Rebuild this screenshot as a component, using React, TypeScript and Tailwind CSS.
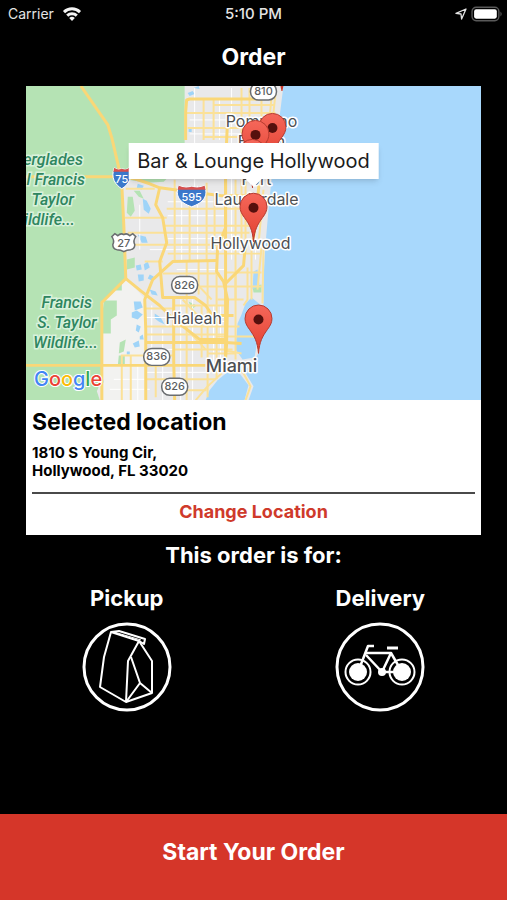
import React, { useState } from 'react';

type OrderType = 'pickup' | 'delivery';

const parkLabels = [
  { x: 83, y: 165, text: 'erglades' },
  { x: 85, y: 185, text: 'l Francis' },
  { x: 74, y: 205, text: 'Taylor' },
  { x: 75, y: 225, text: 'ildlife...' },
  { x: 92, y: 308, text: 'Francis' },
  { x: 97, y: 329, text: 'S. Taylor' },
  { x: 98, y: 349, text: 'Wildlife...' },
];

const cityLabels = [
  { x: 262, y: 127, text: 'Pompano', size: 16 },
  { x: 262, y: 147, text: 'Beach', size: 16 },
  { x: 257, y: 185, text: 'Fort', size: 16 },
  { x: 257, y: 205, text: 'Lauderdale', size: 16 },
  { x: 251, y: 249, text: 'Hollywood', size: 16 },
  { x: 194, y: 325, text: 'Hialeah', size: 16 },
  { x: 232, y: 373, text: 'Miami', size: 18 },
];

const routes = [
  { x: 264, y: 91, text: '810' },
  { x: 185, y: 285, text: '826' },
  { x: 157, y: 357, text: '836' },
  { x: 175, y: 387, text: '826' },
];

const pins = [
  { x: 273, y: 162 },
  { x: 256, y: 169 },
  { x: 253, y: 188 },
  { x: 254, y: 242 },
  { x: 259, y: 354 },
];

const mainRoads = [
  'M81 86 L108 125 L112 138 L119 168 L122 185 L124 225 L126 279 L102 303 L102 401',
  'M26 177 H120 L135 179 L150 184 L160 188 L190 192 L222 196 H262',
  'M160 188 L156 205 L163 218 L167 243 L160 262 L163 298 H195 L206 306 L213 316 L234 316',
  'M186 140 V112 L187 100 L190 99 H262',
  'M126 279 L142 292 L160 306 L172 318 L200 340 H226',
  'M228 120 L226 165 L226 205 L226 228 L218 248 L217 272 L224 282 L228 300 L227 345 L226 358 L222 362',
  'M217 261 L173 262 L153 280 L145 300 L146 330 L146 401',
  'M260 180 L254 240 L246 244 L244 266 L226 284',
  'M26 366 H222',
  'M174 298 V360 L175 401',
  'M146 343 H226 L242 344',
  'M226 180 V360',
];

const minorRoads = [
  'M242 88 V240 M250 88 V180 M262 88 V170 M204 99 V140 M214 99 V140 M272 98 L268 140 M276 94 L270 150',
  'M187 113 H276 M188 128 H272 M204 137 H250 M214 105 H275',
  'M175 180 V262 M190 200 V262 M207 183 V262 M215 195 V236 M236 180 V300 M246 180 V250 M264 190 L259 245',
  'M125 218 H167 M167 209 H250 M165 226 H250 M128 233 H250 M128 245 H235 M168 254 H262 M126 189 H155',
  'M187 262 V401 M199 262 V295 M208 262 V398 M217 275 V380 M236 275 V360 M202 306 V358',
  'M163 274 H220 M173 287 H262 M226 273 H262 M146 309 H174 M147 327 H240 M174 306 H228 M146 335 H226',
  'M131 356 V401 M122 401 V356 H174 M156 366 V398 M174 350 H233 M208 354 H236 M146 380 H216 M175 391 H207',
  'M262 248 L258 290 M248 268 V300 L244 306 M252 250 V300 M183 300 L200 318 M195 282 L212 300',
  'M217 337 H257 M226 351 L242 354 M163 262 H145 M218 300 H244 M174 316 L206 350',
  'M232 362 L244 374 L251 387 L246 401 M222 374 L207 388 L196 401',
];

const grayStreets = [
  'M195 88 V200 M220 100 V140 M232 88 V260 M256 200 V260 M182 186 V262 M198 186 V262 M140 205 V250',
  'M190 120 H262 M190 134 H262 M168 202 H226 M168 216 H226 M168 239 H226 M150 250 H220 M177 270 H226',
  'M181 300 V401 M193 300 V401 M214 306 V366 M221 306 V366 M152 306 V360 M163 330 V401 M138 366 V401',
  'M146 318 H226 M178 322 H226 M150 350 H222 M146 373 H210 M178 380 H208 M110 390 H150 M114 380 H145',
];

const ponds =
  'M143 199 l4 2 4 8 -2 5 -5 -4z M138 184 l6 2 -2 4 -5 -2z M136 266 l5 -1 1 5 -5 1z M144 265 l4 -3 2 6 -5 3z M138 275 l6 0 0 6 -5 1z M150 275 l4 2 -2 4 -4 -2z M134 302 l7 0 2 6 -8 3z M132 313 l5 -2 6 4 -5 5 -6 -2z M137 325 l4 2 -2 6 -3 -2z M133 344 l6 -3 1 6 -5 1z M140 337 l3 -2 1 5 -4 0z M155 314 l6 4 4 7 -6 -3 -4 -3z M150 290 l6 2 2 4 -6 -1z M138 235 l8 2 2 6 -6 0z M188 93 l5 -2 2 3 -5 2z M189 128 l3 0 0 4 -3 0z M99 382 l4 -3 1 4 -4 3z M194 88 l5 -2 1 3z M127 352 l3 0 0 3 -3 0z';

const parks =
  'M128 197 l5 0 2 14 -4 6 -4 -4z M127 260 l8 -2 0 10 -8 2z M115 287 l7 -4 0 8 -6 0z M104 301 l13 0 0 15 -6 4 0 14 -9 0 0 -14z M120 343 l6 -3 -2 12 -5 2z M119 356 h6 v10 h-7z M253 287 l9 -2 0 8 -8 0z M189 302 l8 4 -5 4z M134 191 l6 0 4 8 -5 -2z';

function MapPin({ x, y }: { x: number; y: number }) {
  return (
    <g transform={`translate(${x} ${y})`}>
      <path
        d="M0 0 C-1 -12 -4 -17 -9 -24 C-12 -28 -13.5 -31 -13.5 -35 A13.5 13.5 0 0 1 13.5 -35 C13.5 -31 12 -28 9 -24 C4 -17 1 -12 0 0Z"
        fill="url(#pinFill)"
        stroke="#b53a2e"
        strokeWidth="1"
      />
      <circle cx="0" cy="-34" r="5" fill="#55100d" />
    </g>
  );
}

function Interstate({ x, y, w, text }: { x: number; y: number; w: number; text: string }) {
  const r = w / 2;
  return (
    <g transform={`translate(${x} ${y})`}>
      <path
        d={`M${-r + 1} -10 Q${-r / 2} -7 0 -9 Q${r / 2} -7 ${r - 1} -10 C${r + 3} 0 ${r - 2} 7 0 11 C${-r + 2} 7 ${-r - 3} 0 ${-r + 1} -10Z`}
        fill="#3b78cb"
        stroke="#fff"
        strokeWidth="1"
      />
      <path d={`M${-r + 1} -10 Q${-r / 2} -7 0 -9 Q${r / 2} -7 ${r - 1} -10 L${r} -6 H${-r}Z`} fill="#d8504d" />
      <text y="5" fontSize="11" fontWeight="500" textAnchor="middle" fill="#fff">
        {text}
      </text>
    </g>
  );
}

function LocationMap() {
  return (
    <svg
      viewBox="26 86 456 315"
      className="block w-full font-[Inter,'Liberation_Sans',sans-serif]"
      role="img"
      aria-label="Map of restaurant locations"
    >
      <defs>
        <linearGradient id="pinFill" x1="0" y1="0" x2="0" y2="1">
          <stop offset="0" stopColor="#f5675a" />
          <stop offset="1" stopColor="#e2402f" />
        </linearGradient>
      </defs>

      {/* Land, parks and water */}
      <rect x="26" y="86" width="456" height="315" fill="#e9e9ea" />
      <path d="M126 279 L102 303 V401 H146 V300 Z" fill="#f2f2f0" />
      <path
        d="M26 86 H185 V144 L187 160 L164 182 L148 183 L122 179 L124 225 L126 279 L102 303 V366 L103 378 L97 392 L100 401 H26Z"
        fill="#b5e3b4"
      />
      <path d={parks} fill="#b5e3b4" />
      <path d={ponds} fill="#9fd4f8" />
      <path d="M284 86 L281 110 L277 140 L272 180 L269 210 L266 245 L264 280 L264 305 L262 330 L260 352 L254 362 L245 372 L254 387 L249 401 H482 V86Z" fill="#a8d8fc" />
      <path d="M252 298 L246 304 L242 315 L238 324 L236 350 L243 360 L255 358 L260 330 L262 306Z" fill="#a8d8fc" />
      <path d="M206 401 L210 391 L218 381 L229 372 L240 374 L249 386 L245 401Z" fill="#a8d8fc" />
      <path d="M254 272 L258 270 L260 286 L253 290Z" fill="#a8d8fc" />

      {/* Road network */}
      <g fill="none" stroke="#fff" strokeWidth="1">
        {grayStreets.map((d) => (
          <path key={d} d={d} />
        ))}
      </g>
      <g fill="none" stroke="#fbe198" strokeWidth="2">
        {minorRoads.map((d) => (
          <path key={d} d={d} />
        ))}
      </g>
      <g fill="none" stroke="#fad777" strokeWidth="3" strokeLinejoin="round">
        {mainRoads.map((d) => (
          <path key={d} d={d} />
        ))}
      </g>
      <path d="M264 250 L263 304" fill="none" stroke="#fae3a0" strokeWidth="2" />

      {/* Route shields */}
      {routes.map((route) => (
        <g key={`${route.text}-${route.y}`}>
          <rect x={route.x - 13} y={route.y - 8} width="26" height="17" rx="8" fill="#fff" stroke="#6a6d70" strokeWidth="1.5" />
          <text x={route.x} y={route.y + 4} fontSize="11" fontWeight="500" textAnchor="middle" fill="#5b5e61">
            {route.text}
          </text>
        </g>
      ))}
      <path
        d="M115 234 L118 236 Q121 233 124 235 Q127 233 130 236 L133 234 L136 237 Q133 241 135 245 Q135 249 131 250 Q127 250 124 252 Q121 250 117 250 Q113 249 113 245 Q115 241 112 237Z"
        fill="#fff"
        stroke="#6a6d70"
        strokeWidth="1.5"
      />
      <text x="124" y="247" fontSize="11" fontWeight="500" textAnchor="middle" fill="#5b5e61">
        27
      </text>
      <Interstate x={122} y={178} w={17} text="75" />
      <Interstate x={192} y={196} w={28} text="595" />

      {/* Place names */}
      <g
        fontSize="16"
        fontStyle="italic"
        fontWeight="500"
        fill="#2f8660"
        stroke="#d9f2dc"
        strokeWidth="3"
        paintOrder="stroke"
        textAnchor="end"
        className="font-[Roboto,sans-serif]"
      >
        {parkLabels.map((label) => (
          <text key={label.text + label.y} x={label.x} y={label.y}>
            {label.text}
          </text>
        ))}
      </g>
      <g stroke="#fff" strokeWidth="3" strokeLinejoin="round" paintOrder="stroke" textAnchor="middle" fill="#4d4f52">
        {cityLabels.map((label) => (
          <text
            key={label.text}
            x={label.x}
            y={label.y}
            fontSize={label.size}
            fontWeight={label.text === 'Miami' ? 500 : 400}
          >
            {label.text}
          </text>
        ))}
      </g>

      <text x="34" y="387" fontSize="20" fontWeight="500" stroke="#fff" strokeWidth="2" paintOrder="stroke">
        <tspan fill="#4285f4">G</tspan>
        <tspan fill="#ea4335">o</tspan>
        <tspan fill="#fbbc05">o</tspan>
        <tspan fill="#4285f4">g</tspan>
        <tspan fill="#34a853">l</tspan>
        <tspan fill="#ea4335">e</tspan>
      </text>

      <path d="M281 86 h3 l-1 5 h-1z" fill="#c5372c" />
      {pins.map((pin) => (
        <MapPin key={`${pin.x}-${pin.y}`} x={pin.x} y={pin.y} />
      ))}
    </svg>
  );
}

function StatusBar() {
  return (
    <div className="grid grid-cols-3 items-center h-7 px-2 font-[Inter,'Liberation_Sans',sans-serif] text-sm text-[#e4e4e4]">
      <div className="flex items-center gap-2">
        <span>Carrier</span>
        <svg viewBox="0 0 20 15" className="w-5 h-4" fill="none" stroke="#f4f4f4" strokeWidth="3">
          <path d="M2 5.6 A11.5 11.5 0 0 1 18 5.6" />
          <path d="M5.2 9.2 A7 7 0 0 1 14.8 9.2" />
          <path d="M10 14.5 L7.2 11.6 A4 4 0 0 1 12.8 11.6Z" fill="#f4f4f4" stroke="none" />
        </svg>
      </div>
      <span className="text-center text-[15px] font-medium">5:10 PM</span>
      <div className="flex items-center justify-end gap-1 -mr-1">
        <svg viewBox="0 0 12 12" className="w-3 h-3" fill="none" stroke="#e4e4e4" strokeWidth="1.3" strokeLinejoin="round">
          <path d="M11 1 L1 5.4 L6 6 L6.6 11Z" />
        </svg>
        <svg viewBox="0 0 31 15" className="w-8 h-4">
          <rect x="1" y="1" width="26" height="13" rx="4" fill="none" stroke="#595959" strokeWidth="1.3" />
          <rect x="3" y="3" width="22" height="9" rx="2" fill="#fff" />
          <path d="M28.5 5 Q31 7.5 28.5 10Z" fill="#595959" />
        </svg>
      </div>
    </div>
  );
}

function BagIcon() {
  return (
    <svg viewBox="0 0 90 90" className="w-[90px] h-[90px]" fill="none" stroke="#fff" strokeLinejoin="round">
      <circle cx="45" cy="45" r="43" strokeWidth="3" />
      <path d="M29 10 L37 9 L63 17 L62 22 L57 19Z" strokeWidth="2" />
      <path d="M32 10 L59 18" strokeWidth="1" />
      <path d="M29 10 L22 35 L18 65 L44 80 L70 71 V39 L57 19 L46 39 L44 80" strokeWidth="2" />
      <path d="M49 35 L58 61 L44 80 M58 61 L70 71" strokeWidth="2" />
    </svg>
  );
}

function BikeIcon() {
  return (
    <svg viewBox="0 0 90 90" className="w-[90px] h-[90px]" fill="none" stroke="#fff" strokeLinejoin="round">
      <circle cx="45" cy="45" r="43" strokeWidth="3" />
      <circle cx="23" cy="50" r="12.5" strokeWidth="2" />
      <circle cx="67" cy="50" r="12.5" strokeWidth="2" />
      <circle cx="23" cy="50" r="9" fill="#fff" stroke="none" />
      <circle cx="67" cy="50" r="9" fill="#fff" stroke="none" />
      <circle cx="47" cy="50" r="4" fill="#fff" stroke="none" />
      <path d="M23 50 L33 24 H39" strokeWidth="2.5" />
      <path d="M31 31 H56 L47 50 L31 33 M56 31 L67 50 H47" strokeWidth="2.5" />
      <path d="M52 26 H63" strokeWidth="3" />
    </svg>
  );
}

export default function App() {
  const [orderType, setOrderType] = useState<OrderType | null>(null);

  const options = [
    { id: 'pickup' as const, label: 'Pickup', icon: BagIcon },
    { id: 'delivery' as const, label: 'Delivery', icon: BikeIcon },
  ];

  return (
    <div className="flex flex-col min-h-screen bg-black text-white font-[Inter,'Liberation_Sans',sans-serif]">
      <StatusBar />

      <h1 className="py-4 text-[23px] leading-[26px] font-bold text-center">Order</h1>

      {/* Location card */}
      <section className="mx-[26px] bg-white text-black">
        <div className="relative">
          <LocationMap />
          <div className="absolute top-[18%] left-1/2 -translate-x-1/2 h-9 px-[9px] bg-white shadow-md text-[20px] leading-9 whitespace-nowrap text-[#1c1c1c]">
            Bar &amp; Lounge Hollywood
            <span className="absolute top-full left-1/2 -translate-x-1/2 border-x-8 border-t-8 border-x-transparent border-t-white" />
          </div>
        </div>
        <div className="px-[6px] pt-2">
          <h2 className="text-[23px] leading-7 font-bold">Selected location</h2>
          <address className="pt-2 pb-3 text-[15px] leading-[18px] font-bold not-italic">
            1810 S Young Cir,
            <br />
            Hollywood, FL 33020
          </address>
          <div className="border-t-2 border-[#4a4a4a] text-center">
            <button type="button" className="h-[41px] pb-[6px] text-[18px] font-bold text-[#cf3a2b]">
              Change Location
            </button>
          </div>
        </div>
      </section>

      {/* Order type */}
      <h2 className="pt-[6px] text-[22px] leading-7 font-bold text-center">This order is for:</h2>
      <div className="grid grid-cols-2 pt-[15px]">
        {options.map((option) => {
          const Icon = option.icon;
          return (
            <button
              key={option.id}
              type="button"
              aria-pressed={orderType === option.id}
              onClick={() => setOrderType(option.id)}
              className="flex flex-col items-center gap-[10px] text-[22px] leading-7 font-bold"
            >
              <span>{option.label}</span>
              <Icon />
            </button>
          );
        })}
      </div>

      <button
        type="button"
        className="mt-auto w-full h-[86px] pb-[10px] bg-[#d53629] text-[23px] font-bold text-center"
      >
        Start Your Order
      </button>
    </div>
  );
}
